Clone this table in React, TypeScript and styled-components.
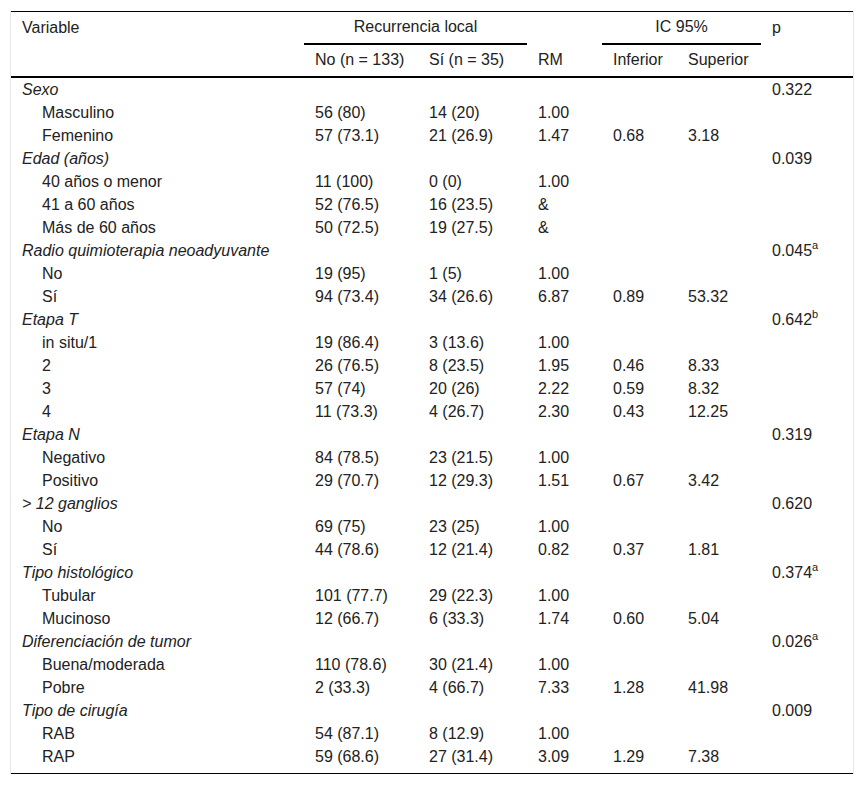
import styled, { createGlobalStyle } from "styled-components";

const GlobalStyle = createGlobalStyle`
	html, body {
		margin: 0;
		padding: 0;
		background: #fff;
	}
	body {
		font-family: "Liberation Sans", Arial, sans-serif;
		color: #222;
	}
`;

const Frame = styled.div`
	margin: 11px 0 0 10px;
	width: 844px;
	box-sizing: border-box;
	border-left: 1px solid #e6e6e6;
	border-right: 1px solid #e6e6e6;
`;

const Table = styled.table`
	width: 842px;
	border-collapse: collapse;
	table-layout: fixed;
	font-size: 16px;
	border-top: 1px solid #000;
	border-bottom: 1px solid #000;

	tbody tr:last-child td {
		padding-bottom: 5px;
	}
`;

const HeadRow = styled.tr<{ $last?: boolean }>`
	height: ${(p) => (p.$last ? "33px" : "32px")};
	border-bottom: ${(p) => (p.$last ? "2px solid #000" : "none")};
`;

const Th = styled.th<{ $align?: string; $rule?: boolean }>`
	font-weight: normal;
	text-align: ${(p) => p.$align || "left"};
	padding: 0 11px;
	vertical-align: middle;
	border-bottom: ${(p) => (p.$rule ? "2px solid #000" : "none")};
`;

const Row = styled.tr`
	height: 23px;
`;

const Cell = styled.td<{ $group?: boolean; $indent?: boolean }>`
	padding: 0 11px 0 ${(p) => (p.$indent ? "31px" : "11px")};
	font-style: ${(p) => (p.$group ? "italic" : "normal")};
	white-space: nowrap;
	vertical-align: top;
	line-height: 23px;
`;

const Sup = styled.sup`
	font-size: 11px;
	line-height: 0;
	vertical-align: 7px;
`;

type Item = [string, string, string, string, string?, string?];

interface Group {
	name: string;
	p: string;
	note?: string;
	items: Item[];
}

const groups: Group[] = [
	{
		name: "Sexo",
		p: "0.322",
		items: [
			["Masculino", "56 (80)", "14 (20)", "1.00"],
			["Femenino", "57 (73.1)", "21 (26.9)", "1.47", "0.68", "3.18"],
		],
	},
	{
		name: "Edad (años)",
		p: "0.039",
		items: [
			["40 años o menor", "11 (100)", "0 (0)", "1.00"],
			["41 a 60 años", "52 (76.5)", "16 (23.5)", "&"],
			["Más de 60 años", "50 (72.5)", "19 (27.5)", "&"],
		],
	},
	{
		name: "Radio quimioterapia neoadyuvante",
		p: "0.045",
		note: "a",
		items: [
			["No", "19 (95)", "1 (5)", "1.00"],
			["Sí", "94 (73.4)", "34 (26.6)", "6.87", "0.89", "53.32"],
		],
	},
	{
		name: "Etapa T",
		p: "0.642",
		note: "b",
		items: [
			["in situ/1", "19 (86.4)", "3 (13.6)", "1.00"],
			["2", "26 (76.5)", "8 (23.5)", "1.95", "0.46", "8.33"],
			["3", "57 (74)", "20 (26)", "2.22", "0.59", "8.32"],
			["4", "11 (73.3)", "4 (26.7)", "2.30", "0.43", "12.25"],
		],
	},
	{
		name: "Etapa N",
		p: "0.319",
		items: [
			["Negativo", "84 (78.5)", "23 (21.5)", "1.00"],
			["Positivo", "29 (70.7)", "12 (29.3)", "1.51", "0.67", "3.42"],
		],
	},
	{
		name: "> 12 ganglios",
		p: "0.620",
		items: [
			["No", "69 (75)", "23 (25)", "1.00"],
			["Sí", "44 (78.6)", "12 (21.4)", "0.82", "0.37", "1.81"],
		],
	},
	{
		name: "Tipo histológico",
		p: "0.374",
		note: "a",
		items: [
			["Tubular", "101 (77.7)", "29 (22.3)", "1.00"],
			["Mucinoso", "12 (66.7)", "6 (33.3)", "1.74", "0.60", "5.04"],
		],
	},
	{
		name: "Diferenciación de tumor",
		p: "0.026",
		note: "a",
		items: [
			["Buena/moderada", "110 (78.6)", "30 (21.4)", "1.00"],
			["Pobre", "2 (33.3)", "4 (66.7)", "7.33", "1.28", "41.98"],
		],
	},
	{
		name: "Tipo de cirugía",
		p: "0.009",
		items: [
			["RAB", "54 (87.1)", "8 (12.9)", "1.00"],
			["RAP", "59 (68.6)", "27 (31.4)", "3.09", "1.29", "7.38"],
		],
	},
];

const widths = [293, 114, 109, 75, 75, 84, 92];

const App = () => {
	return (
		<>
			<GlobalStyle />
			<Frame>
				<Table>
					<colgroup>
						{widths.map((w, i) => (
							<col key={i} style={{ width: w }} />
						))}
					</colgroup>
					<thead>
						<HeadRow>
							<Th>Variable</Th>
							<Th colSpan={2} $align="center" $rule>
								Recurrencia local
							</Th>
							<Th />
							<Th colSpan={2} $align="center" $rule>
								IC 95%
							</Th>
							<Th>p</Th>
						</HeadRow>
						<HeadRow $last>
							<Th />
							<Th>No (n = 133)</Th>
							<Th>Sí (n = 35)</Th>
							<Th>RM</Th>
							<Th>Inferior</Th>
							<Th>Superior</Th>
							<Th />
						</HeadRow>
					</thead>
					<tbody>
						{groups.map((g) => [
							<Row key={g.name}>
								<Cell $group colSpan={6}>
									{g.name}
								</Cell>
								<Cell>
									{g.p}
									{g.note && <Sup>{g.note}</Sup>}
								</Cell>
							</Row>,
							...g.items.map((it, i) => (
								<Row key={g.name + i}>
									<Cell $indent>{it[0]}</Cell>
									<Cell>{it[1]}</Cell>
									<Cell>{it[2]}</Cell>
									<Cell>{it[3]}</Cell>
									<Cell>{it[4] || ""}</Cell>
									<Cell>{it[5] || ""}</Cell>
									<Cell />
								</Row>
							)),
						])}
					</tbody>
				</Table>
			</Frame>
		</>
	);
};

export default App;
